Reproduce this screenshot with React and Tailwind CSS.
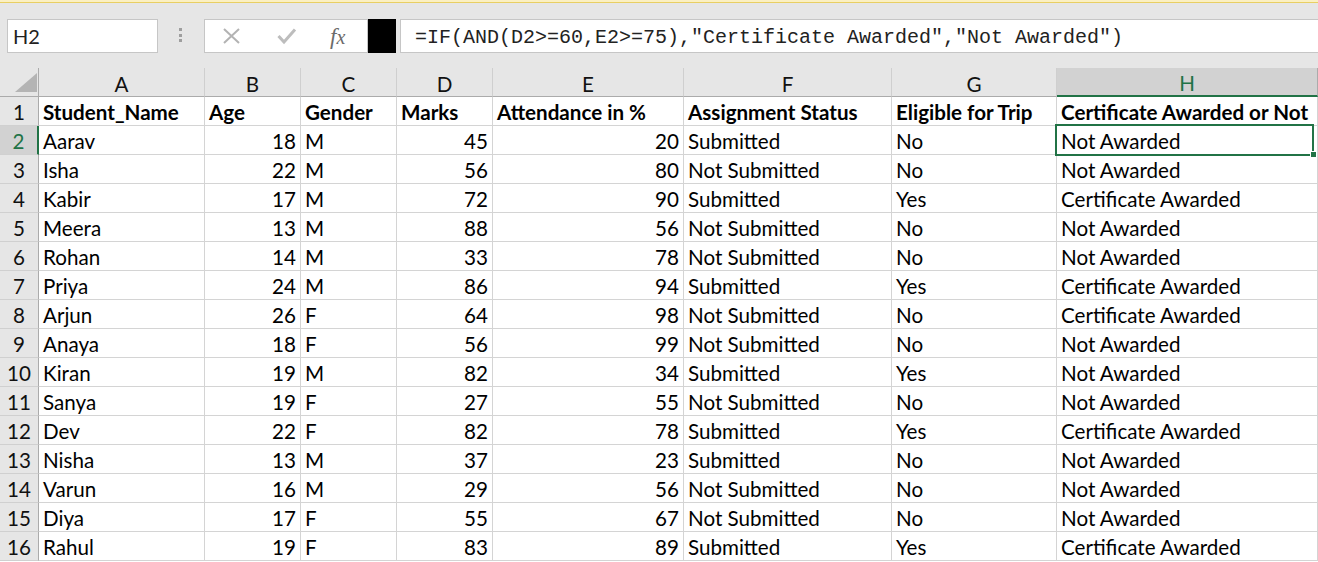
import React from "react";

const rows = [
  ["Aarav", 18, "M", 45, 20, "Submitted", "No", "Not Awarded"],
  ["Isha", 22, "M", 56, 80, "Not Submitted", "No", "Not Awarded"],
  ["Kabir", 17, "M", 72, 90, "Submitted", "Yes", "Certificate Awarded"],
  ["Meera", 13, "M", 88, 56, "Not Submitted", "No", "Not Awarded"],
  ["Rohan", 14, "M", 33, 78, "Not Submitted", "No", "Not Awarded"],
  ["Priya", 24, "M", 86, 94, "Submitted", "Yes", "Certificate Awarded"],
  ["Arjun", 26, "F", 64, 98, "Not Submitted", "No", "Certificate Awarded"],
  ["Anaya", 18, "F", 56, 99, "Not Submitted", "No", "Not Awarded"],
  ["Kiran", 19, "M", 82, 34, "Submitted", "Yes", "Not Awarded"],
  ["Sanya", 19, "F", 27, 55, "Not Submitted", "No", "Not Awarded"],
  ["Dev", 22, "F", 82, 78, "Submitted", "Yes", "Certificate Awarded"],
  ["Nisha", 13, "M", 37, 23, "Submitted", "No", "Not Awarded"],
  ["Varun", 16, "M", 29, 56, "Not Submitted", "No", "Not Awarded"],
  ["Diya", 17, "F", 55, 67, "Not Submitted", "No", "Not Awarded"],
  ["Rahul", 19, "F", 83, 89, "Submitted", "Yes", "Certificate Awarded"],
];

const headers = [
  "Student_Name",
  "Age",
  "Gender",
  "Marks",
  "Attendance in %",
  "Assignment Status",
  "Eligible for Trip",
  "Certificate Awarded or Not",
];

const letters = ["A", "B", "C", "D", "E", "F", "G", "H"];
const numeric = [false, true, false, true, true, false, false, false];

const gridCols = "grid grid-cols-[39px_166px_96px_96px_96px_191px_208px_165px_1fr]";
const font = { fontFamily: "Lato, 'Noto Sans', sans-serif" };

function Cell({ children, right, bold, selected }) {
  return (
    <div
      className={`relative h-[29px] border-r border-b border-[#d4d4d4] bg-white flex items-end pb-[1px] text-[20.6px] leading-[24px] text-black whitespace-nowrap overflow-visible ${
        right ? "justify-end pr-[4px]" : "pl-[4px]"
      } ${bold ? "font-bold" : ""}`}
    >
      <span className="relative z-10">{children}</span>
      {selected && (
        <>
          <div className="absolute left-[-2px] top-[-2px] right-[3px] bottom-[-2px] border-2 border-[#217346] z-20 pointer-events-none" />
          <div className="absolute right-0 bottom-[-4px] w-[5px] h-[5px] bg-[#217346] border border-white z-30 box-content" />
        </>
      )}
    </div>
  );
}

export default function App() {
  return (
    <div className="w-[1318px] h-[562px] overflow-hidden bg-white" style={font}>
      {/* top accent */}
      <div className="h-[2px] bg-[#fbf0c2]" />
      <div className="h-[1px] bg-[#e8cf63]" />
      {/* formula toolbar */}
      <div className="h-[65px] bg-[#e6e6e6] flex items-start pt-[16px]">
        <div className="ml-[7px] w-[151px] h-[34px] bg-white border border-[#c6c6c6] flex items-center pl-[5px] text-[20px] text-[#222]">
          H2
        </div>
        <div className="ml-[21px] mt-[9px] flex flex-col gap-[2.5px]">
          <div className="w-[3px] h-[3px] bg-[#9e9e9e]" />
          <div className="w-[3px] h-[3px] bg-[#9e9e9e]" />
          <div className="w-[3px] h-[3px] bg-[#9e9e9e]" />
        </div>
        <div className="ml-[22px] w-[164px] h-[34px] bg-white border border-[#c6c6c6] flex items-center">
          <svg width="20" height="18" viewBox="0 0 20 18" className="ml-[17px]">
            <path d="M2 2 L17 16 M17 2 L2 16" stroke="#b3b3b3" strokeWidth="2" fill="none" />
          </svg>
          <svg width="20" height="18" viewBox="0 0 20 18" className="ml-[35px]">
            <path d="M1.5 9 L7 15 L18 2.5" stroke="#bdbdbd" strokeWidth="3" fill="none" />
          </svg>
          <span
            className="ml-[33px] text-[23px] italic text-[#6b6b6b] leading-none"
            style={{ fontFamily: "'Liberation Serif', 'DejaVu Serif', serif" }}
          >
            f<span className="text-[20px]">x</span>
          </span>
        </div>
        <div className="w-[28px] h-[34px] bg-black" />
        <div
          className="ml-[4px] flex-1 h-[34px] bg-white border-y border-l border-[#c6c6c6] flex items-center pl-[14px] pt-[3px] text-[20px] text-[#222] whitespace-nowrap"
          style={{ fontFamily: "'Liberation Mono', 'DejaVu Sans Mono', monospace" }}
        >
          =IF(AND(D2&gt;=60,E2&gt;=75),"Certificate Awarded","Not Awarded")
        </div>
      </div>
      {/* grid */}
      <div className={gridCols}>
        {/* column header row */}
        <div className="relative h-[29px] bg-[#e6e6e6] border-r border-b border-[#ababab]">
          <svg width="22" height="19" className="absolute left-[15px] bottom-[4px]" viewBox="0 0 22 19">
            <polygon points="22,0 22,19 0,19" fill="#b4b4b4" />
          </svg>
        </div>
        {letters.map((l) => {
          const sel = l === "H";
          return (
            <div
              key={l}
              className={`h-[29px] flex items-end justify-center pb-0 text-[20.6px] leading-[24px] ${
                sel
                  ? "bg-[#d2d2d2] text-[#217346] border-b-2 border-b-[#217346] border-r border-r-[#ababab]"
                  : "bg-[#e6e6e6] text-[#111] border-b border-b-[#ababab] border-r border-r-[#cfcfcf]"
              }`}
            >
              {l}
            </div>
          );
        })}
        {/* header data row */}
        <div className="h-[29px] bg-[#e6e6e6] border-r border-r-[#ababab] border-b border-b-[#d0d0d0] flex items-end justify-center pb-[1px] text-[20.6px] leading-[24px] text-[#111]">
          1
        </div>
        {headers.map((h) => (
          <Cell key={h} bold>
            {h}
          </Cell>
        ))}
        {rows.map((r, ri) => {
          const n = ri + 2;
          const sel = n === 2;
          return (
            <React.Fragment key={n}>
              <div
                className={`h-[29px] border-b border-b-[#d0d0d0] flex items-end justify-center pb-[1px] text-[20.6px] leading-[24px] ${
                  sel
                    ? "bg-[#d2d2d2] text-[#217346] border-r-2 border-r-[#217346]"
                    : "bg-[#e6e6e6] text-[#111] border-r border-r-[#ababab]"
                }`}
              >
                {n}
              </div>
              {r.map((v, ci) => (
                <Cell key={ci} right={numeric[ci]} selected={sel && ci === 7}>
                  {v}
                </Cell>
              ))}
            </React.Fragment>
          );
        })}
      </div>
    </div>
  );
}
